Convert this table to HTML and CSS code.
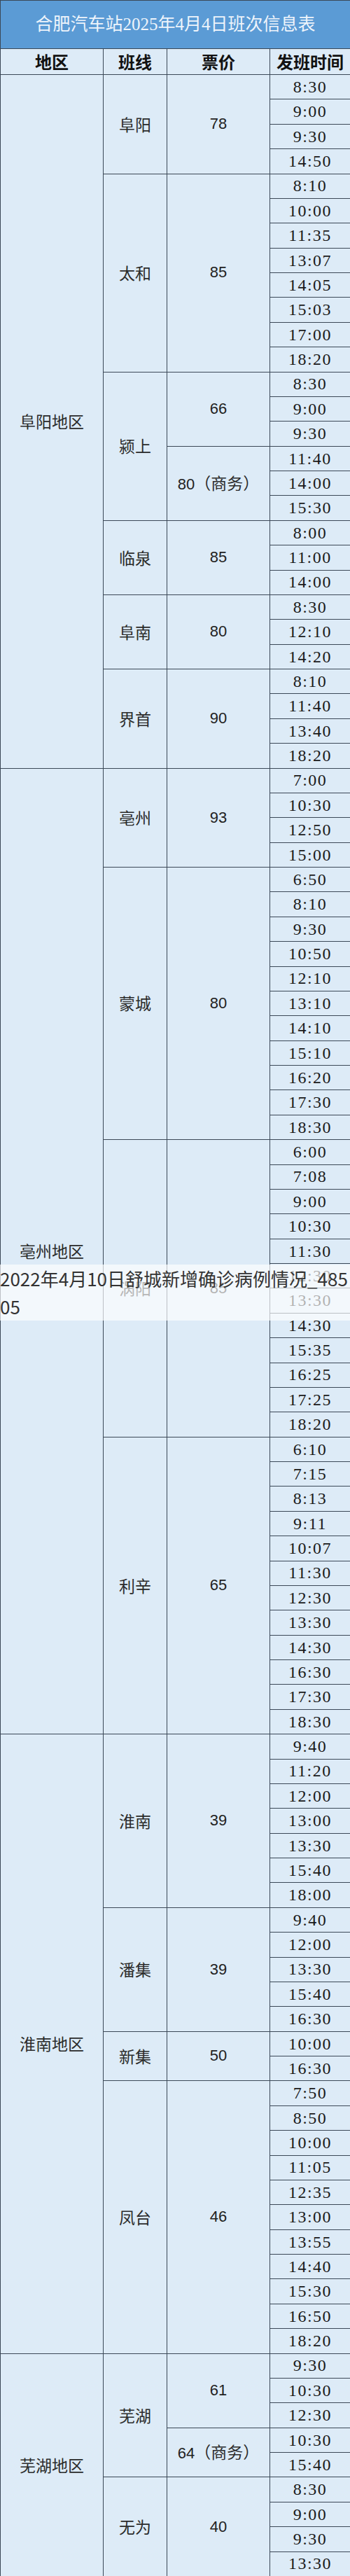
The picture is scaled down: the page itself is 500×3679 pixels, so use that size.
FILE: index.html
```html
<!DOCTYPE html>
<html lang="zh-CN">
<head>
<meta charset="utf-8">
<title>合肥汽车站2025年4月4日班次信息表</title>
<link rel="stylesheet" href="styles.css">
</head>
<body>
<div class="page">
<table class="sheet">
<colgroup><col class="c-area"><col class="c-line"><col class="c-price"><col class="c-time"></colgroup>
<thead>
<tr><th colspan="4" class="title">合肥汽车站2025年4月4日班次信息表</th></tr>
<tr class="head-row"><th>地区</th><th>班线</th><th>票价</th><th>发班时间</th></tr>
</thead>
<tbody>
<tr><td class="area" rowspan="28">阜阳地区</td><td class="line" rowspan="4">阜阳</td><td class="price" rowspan="4">78</td><td class="time">8:30</td></tr>
<tr><td class="time">9:00</td></tr>
<tr><td class="time">9:30</td></tr>
<tr><td class="time">14:50</td></tr>
<tr><td class="line" rowspan="8">太和</td><td class="price" rowspan="8">85</td><td class="time">8:10</td></tr>
<tr><td class="time">10:00</td></tr>
<tr><td class="time">11:35</td></tr>
<tr><td class="time">13:07</td></tr>
<tr><td class="time">14:05</td></tr>
<tr><td class="time">15:03</td></tr>
<tr><td class="time">17:00</td></tr>
<tr><td class="time">18:20</td></tr>
<tr><td class="line" rowspan="6">颍上</td><td class="price" rowspan="3">66</td><td class="time">8:30</td></tr>
<tr><td class="time">9:00</td></tr>
<tr><td class="time">9:30</td></tr>
<tr><td class="price" rowspan="3">80<span class="cjk">（商务）</span></td><td class="time">11:40</td></tr>
<tr><td class="time">14:00</td></tr>
<tr><td class="time">15:30</td></tr>
<tr><td class="line" rowspan="3">临泉</td><td class="price" rowspan="3">85</td><td class="time">8:00</td></tr>
<tr><td class="time">11:00</td></tr>
<tr><td class="time">14:00</td></tr>
<tr><td class="line" rowspan="3">阜南</td><td class="price" rowspan="3">80</td><td class="time">8:30</td></tr>
<tr><td class="time">12:10</td></tr>
<tr><td class="time">14:20</td></tr>
<tr><td class="line" rowspan="4">界首</td><td class="price" rowspan="4">90</td><td class="time">8:10</td></tr>
<tr><td class="time">11:40</td></tr>
<tr><td class="time">13:40</td></tr>
<tr><td class="time">18:20</td></tr>

<tr><td class="area" rowspan="39">亳州地区</td><td class="line" rowspan="4">亳州</td><td class="price" rowspan="4">93</td><td class="time">7:00</td></tr>
<tr><td class="time">10:30</td></tr>
<tr><td class="time">12:50</td></tr>
<tr><td class="time">15:00</td></tr>
<tr><td class="line" rowspan="11">蒙城</td><td class="price" rowspan="11">80</td><td class="time">6:50</td></tr>
<tr><td class="time">8:10</td></tr>
<tr><td class="time">9:30</td></tr>
<tr><td class="time">10:50</td></tr>
<tr><td class="time">12:10</td></tr>
<tr><td class="time">13:10</td></tr>
<tr><td class="time">14:10</td></tr>
<tr><td class="time">15:10</td></tr>
<tr><td class="time">16:20</td></tr>
<tr><td class="time">17:30</td></tr>
<tr><td class="time">18:30</td></tr>
<tr><td class="line" rowspan="12">涡阳</td><td class="price" rowspan="12">85</td><td class="time">6:00</td></tr>
<tr><td class="time">7:08</td></tr>
<tr><td class="time">9:00</td></tr>
<tr><td class="time">10:30</td></tr>
<tr><td class="time">11:30</td></tr>
<tr><td class="time">12:30</td></tr>
<tr><td class="time">13:30</td></tr>
<tr><td class="time">14:30</td></tr>
<tr><td class="time">15:35</td></tr>
<tr><td class="time">16:25</td></tr>
<tr><td class="time">17:25</td></tr>
<tr><td class="time">18:20</td></tr>
<tr><td class="line" rowspan="12">利辛</td><td class="price" rowspan="12">65</td><td class="time">6:10</td></tr>
<tr><td class="time">7:15</td></tr>
<tr><td class="time">8:13</td></tr>
<tr><td class="time">9:11</td></tr>
<tr><td class="time">10:07</td></tr>
<tr><td class="time">11:30</td></tr>
<tr><td class="time">12:30</td></tr>
<tr><td class="time">13:30</td></tr>
<tr><td class="time">14:30</td></tr>
<tr><td class="time">16:30</td></tr>
<tr><td class="time">17:30</td></tr>
<tr><td class="time">18:30</td></tr>

<tr><td class="area" rowspan="25">淮南地区</td><td class="line" rowspan="7">淮南</td><td class="price" rowspan="7">39</td><td class="time">9:40</td></tr>
<tr><td class="time">11:20</td></tr>
<tr><td class="time">12:00</td></tr>
<tr><td class="time">13:00</td></tr>
<tr><td class="time">13:30</td></tr>
<tr><td class="time">15:40</td></tr>
<tr><td class="time">18:00</td></tr>
<tr><td class="line" rowspan="5">潘集</td><td class="price" rowspan="5">39</td><td class="time">9:40</td></tr>
<tr><td class="time">12:00</td></tr>
<tr><td class="time">13:30</td></tr>
<tr><td class="time">15:40</td></tr>
<tr><td class="time">16:30</td></tr>
<tr><td class="line" rowspan="2">新集</td><td class="price" rowspan="2">50</td><td class="time">10:00</td></tr>
<tr><td class="time">16:30</td></tr>
<tr><td class="line" rowspan="11">凤台</td><td class="price" rowspan="11">46</td><td class="time">7:50</td></tr>
<tr><td class="time">8:50</td></tr>
<tr><td class="time">10:00</td></tr>
<tr><td class="time">11:05</td></tr>
<tr><td class="time">12:35</td></tr>
<tr><td class="time">13:00</td></tr>
<tr><td class="time">13:55</td></tr>
<tr><td class="time">14:40</td></tr>
<tr><td class="time">15:30</td></tr>
<tr><td class="time">16:50</td></tr>
<tr><td class="time">18:20</td></tr>

<tr><td class="area" rowspan="9">芜湖地区</td><td class="line" rowspan="5">芜湖</td><td class="price" rowspan="3">61</td><td class="time">9:30</td></tr>
<tr><td class="time">10:30</td></tr>
<tr><td class="time">12:30</td></tr>
<tr><td class="price" rowspan="2">64<span class="cjk">（商务）</span></td><td class="time">10:30</td></tr>
<tr><td class="time">15:40</td></tr>
<tr><td class="line" rowspan="4">无为</td><td class="price" rowspan="4">40</td><td class="time">8:30</td></tr>
<tr><td class="time">9:00</td></tr>
<tr><td class="time">9:30</td></tr>
<tr><td class="time">13:30</td></tr>
</tbody>
</table>
<p class="notice">2022年4月10日舒城新增确诊病例情况_48505</p>
</div>
</body>
</html>
```

FILE: styles.css
```css
html, body {
  margin: 0;
  padding: 0;
  background: #ffffff;
}

.page {
  position: relative;
  width: 500px;
}

.sheet {
  width: 500px;
  border-collapse: collapse;
  table-layout: fixed;
  background: #ddebf7;
  color: #1c1c1c;
  font-family: "Liberation Serif", "Noto Sans CJK SC", serif;
}

.c-area { width: 147px; }
.c-line { width: 91px; }
.c-price { width: 147px; }
.c-time { width: 115px; }

.sheet th,
.sheet td {
  border: 1px solid #3b4857;
  padding: 0;
  text-align: center;
  vertical-align: middle;
  line-height: 1.1;
  overflow: hidden;
}

.title {
  height: 68px;
  background: #5b9bd5;
  color: #eef4fb;
  font-weight: normal;
  font-size: 25px;
  font-family: "Liberation Serif", "Noto Sans CJK SC", serif;
  padding-top: 4px;
}

.head-row th {
  height: 36px;
  font-size: 24px;
  font-weight: bold;
  color: #111111;
  font-family: "Noto Sans CJK SC", sans-serif;
}

tbody tr {
  height: 35.38px;
}

.time {
  font-size: 24px;
  letter-spacing: 1.5px;
  padding-top: 3px;
  color: #1a1a1a;
}

.area,
.line {
  font-family: "Noto Sans CJK SC", sans-serif;
  font-size: 23px;
  color: #2b2b2b;
}

.price {
  font-family: "Liberation Sans", "Noto Sans CJK SC", sans-serif;
  font-size: 22px;
  color: #222222;
}

.cjk {
  font-family: "Noto Sans CJK SC", sans-serif;
  font-size: 23px;
  color: #2b2b2b;
}

.notice {
  position: absolute;
  left: 0;
  top: 1806px;
  width: 500px;
  margin: 0;
  background: rgba(255, 255, 255, 0.66);
  color: #333333;
  font-family: "Noto Sans CJK SC", sans-serif;
  font-size: 26px;
  line-height: 40px;
  word-break: break-all;
}
```
